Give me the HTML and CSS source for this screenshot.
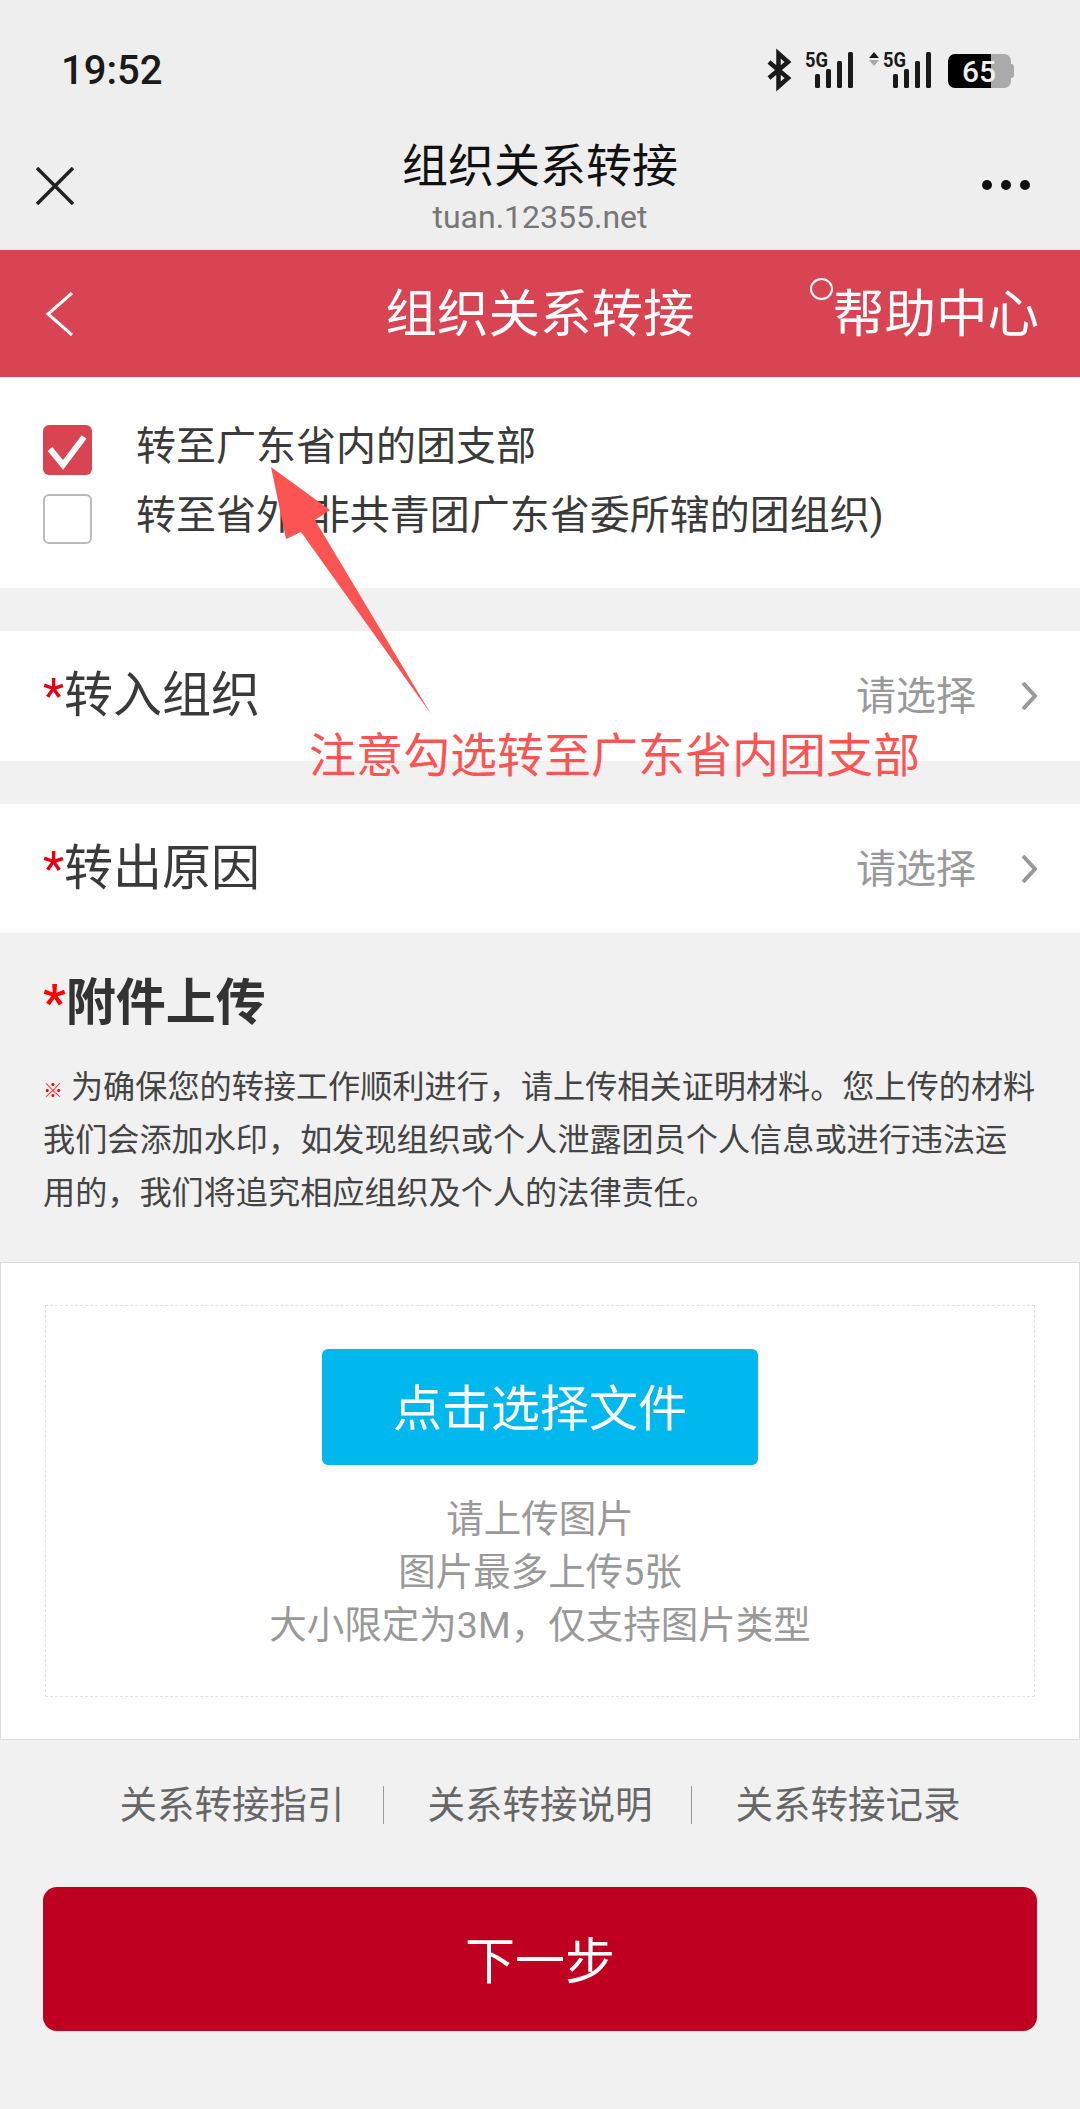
FILE: index.html
```html
<!DOCTYPE html>
<html lang="zh-CN">
<head>
    <meta charset="UTF-8">
    <meta name="viewport" content="width=device-width, initial-scale=1.0">
    <title>组织关系转接</title>
    <link rel="stylesheet" href="styles.css">
</head>
<body>
    <div class="page">
        <div class="status-bar">
            <span class="status-bar__time">19:52</span>
            <svg class="status-bar__icons" width="250" height="60" viewBox="765 40 250 60">
                <polyline class="icon-bt" points="769,62 788,78 778.5,86.5 778.5,53.5 788,62 769,78"/>
                <text class="icon-net" x="805" y="67" textLength="23" lengthAdjust="spacingAndGlyphs">5G</text>
                <rect class="icon-bar" x="815" y="74" width="5" height="14" rx="1.5"/>
                <rect class="icon-bar" x="826" y="69" width="5" height="19" rx="1.5"/>
                <rect class="icon-bar" x="837" y="61" width="5" height="27" rx="1.5"/>
                <rect class="icon-bar" x="848" y="52" width="5" height="36" rx="1.5"/>
                <polygon class="icon-bar" points="874,52 879,58 869,58"/>
                <polygon class="icon-arrow-off" points="869,60 879,60 874,66"/>
                <text class="icon-net" x="883" y="67" textLength="23" lengthAdjust="spacingAndGlyphs">5G</text>
                <rect class="icon-bar" x="893" y="74" width="5" height="14" rx="1.5"/>
                <rect class="icon-bar" x="904" y="69" width="5" height="19" rx="1.5"/>
                <rect class="icon-bar" x="915" y="61" width="5" height="27" rx="1.5"/>
                <rect class="icon-bar" x="926" y="52" width="5" height="36" rx="1.5"/>
                <rect class="icon-arrow-off" x="975" y="54" width="36" height="34" rx="7"/>
                <rect class="icon-arrow-off" x="1008" y="64" width="6" height="14" rx="3"/>
                <path class="icon-batt" d="M955 54h36v34h-36a7 7 0 0 1-7-7v-20a7 7 0 0 1 7-7z"/>
                <text class="icon-level" x="979" y="82" text-anchor="middle">65</text>
            </svg>
        </div>

        <div class="wx-nav">
            <svg class="wx-nav__close" width="38" height="38" viewBox="0 0 38 38">
                <path d="M1 1 L37 37 M37 1 L1 37"/>
            </svg>
            <div class="wx-nav__title">
                <div class="wx-nav__name">组织关系转接</div>
                <div class="wx-nav__url">tuan.12355.net</div>
            </div>
            <div class="wx-nav__more">
                <span></span><span></span><span></span>
            </div>
        </div>

        <div class="header">
            <svg class="header__back" width="28" height="44" viewBox="0 0 28 44">
                <polyline points="26,1 2,22 26,43"/>
            </svg>
            <div class="header__title">组织关系转接</div>
            <div class="header__help"><span class="header__help-text">帮助中心</span></div>
        </div>

        <div class="options">
            <div class="option">
                <span class="checkbox checkbox--on">
                    <svg width="49" height="50" viewBox="0 0 49 50"><polyline points="7,24 20,40 41,12"/></svg>
                </span>
                <span class="option__text">转至广东省内的团支部</span>
            </div>
            <div class="option">
                <span class="checkbox"></span>
                <span class="option__text">转至省外(非共青团广东省委所辖的团组织)</span>
            </div>
        </div>

        <div class="field">
            <span class="field__label"><i class="req">*</i>转入组织</span>
            <span class="field__value">请选择</span>
            <svg class="field__arrow" width="16" height="28" viewBox="0 0 16 28"><polyline points="2,1 14,14 2,27"/></svg>
        </div>
        <div class="field">
            <span class="field__label"><i class="req">*</i>转出原因</span>
            <span class="field__value">请选择</span>
            <svg class="field__arrow" width="16" height="28" viewBox="0 0 16 28"><polyline points="2,1 14,14 2,27"/></svg>
        </div>

        <div class="attach">
            <h2 class="attach__title"><i class="req">*</i>附件上传</h2>
            <p class="attach__note"><i class="attach__mark">※</i> 为确保您的转接工作顺利进行，请上传相关证明材料。您上传的材料我们会添加水印，如发现组织或个人泄露团员个人信息或进行违法运用的，我们将追究相应组织及个人的法律责任。</p>
        </div>

        <div class="upload">
            <div class="upload__box">
                <button class="upload__btn">点击选择文件</button>
                <div class="upload__tips">
                    <div>请上传图片</div>
                    <div>图片最多上传5张</div>
                    <div>大小限定为3M，仅支持图片类型</div>
                </div>
            </div>
        </div>

        <div class="links">
            <a class="links__item">关系转接指引</a>
            <a class="links__item">关系转接说明</a>
            <a class="links__item">关系转接记录</a>
        </div>

        <button class="next-btn">下一步</button>

        <!-- annotation drawn on top of the screenshot -->
        <svg class="note-arrow" width="180" height="260" viewBox="260 460 180 260">
            <polygon points="271,467 330,510 315,520 431,714 301,532 286,539"/>
        </svg>
        <div class="note-text">注意勾选转至广东省内团支部</div>
    </div>
</body>
</html>
```

FILE: styles.css
```css
/* Reset */
* {
    margin: 0;
    padding: 0;
    box-sizing: border-box;
}
body {
    font-family: Roboto, "Noto Sans CJK SC", sans-serif;
    background-color: #f1f1f1;
    color: #333333;
}
i {
    font-style: normal;
}
.page {
    position: relative;
    width: 1080px;
    height: 2109px;
    overflow: hidden;
}

/* Status bar */
.status-bar {
    display: flex;
    align-items: center;
    justify-content: space-between;
    height: 100px;
    padding: 40px 65px 0 61px;
    background-color: #eeeeee;
}
.icon-bt {
    fill: none;
    stroke: #1a1a1a;
    stroke-width: 4.5;
}
.status-bar__time {
    font-size: 40px;
    font-weight: 500;
    color: #1a1a1a;
}
.icon-bar {
    fill: #1a1a1a;
}
.icon-arrow-off {
    fill: #aaaaaa;
}
.icon-batt {
    fill: #000000;
}
.icon-net {
    font-size: 20px;
    font-weight: 700;
    fill: #1a1a1a;
}
.icon-level {
    font-size: 30px;
    font-weight: 500;
    fill: #eeeeee;
}

/* WeChat title bar */
.wx-nav {
    display: grid;
    grid-template-columns: 1fr auto 1fr;
    height: 150px;
    padding-top: 36px;
    background-color: #eeeeee;
}
.wx-nav__close {
    margin: 31px 0 0 36px;
}
.wx-nav__close path {
    fill: none;
    stroke: #222222;
    stroke-width: 3.5;
}
.wx-nav__title {
    text-align: center;
}
.wx-nav__name {
    font-size: 46px;
    line-height: 60px;
    color: #111111;
}
.wx-nav__url {
    font-size: 32px;
    line-height: 42px;
    color: #777777;
}
.wx-nav__more {
    display: flex;
    gap: 9px;
    justify-content: flex-end;
    margin: 44px 50px 0 0;
}
.wx-nav__more span {
    width: 10px;
    height: 10px;
    border-radius: 50%;
    background-color: #111111;
}

/* Red header */
.header {
    display: grid;
    grid-template-columns: 1fr auto 1fr;
    align-items: center;
    height: 127px;
    background-color: #d94453;
    color: #ffffff;
}
.header__back {
    margin-left: 46px;
}
.header__back polyline {
    fill: none;
    stroke: #ffffff;
    stroke-width: 3;
}
.header__title {
    padding-bottom: 8px;
    font-size: 51.5px;
}
.header__help {
    padding: 0 41px 8px 0;
    font-size: 51.5px;
    text-align: right;
}
.header__help-text {
    position: relative;
}
.header__help-text::before {
    content: "";
    position: absolute;
    left: -23px;
    top: -6px;
    width: 19px;
    height: 18px;
    border: 2px solid #ffffff;
    border-radius: 50%;
}

/* Options */
.options {
    display: flex;
    flex-direction: column;
    gap: 19px;
    padding: 48px 43px 44px;
    background-color: #ffffff;
}
.option {
    display: flex;
    align-items: center;
    gap: 44px;
    font-size: 40px;
    color: #3a3a3a;
}
.option__text {
    padding-bottom: 6px;
    line-height: 44px;
}
.checkbox {
    flex: none;
    width: 49px;
    height: 50px;
    border: 2px solid #bbbbbb;
    border-radius: 6px;
}
.checkbox--on {
    border: none;
    background-color: #d94453;
}
.checkbox svg {
    display: block;
}
.checkbox polyline {
    fill: none;
    stroke: #ffffff;
    stroke-width: 6;
}

/* Form rows */
.field {
    display: flex;
    align-items: center;
    height: 130px;
    margin-top: 43px;
    padding: 0 43px 0;
    background-color: #ffffff;
}
.field + .field {
    height: 129px;
}
.field__label {
    flex: 1;
    padding-bottom: 11px;
    font-size: 49px;
    color: #3a3a3a;
}
.req {
    color: #e60012;
}
.field__value {
    padding-bottom: 6px;
    font-size: 40px;
    color: #999999;
}
.field__arrow {
    margin-left: 45px;
}
.field__arrow polyline {
    fill: none;
    stroke: #999999;
    stroke-width: 4;
}

/* Attachments */
.attach {
    padding: 40px 43px 0;
}
.attach__title {
    font-size: 50px;
    font-weight: 700;
    line-height: 60px;
    color: #333333;
}
.attach__title .req {
    color: #ff0000;
}
.attach__note {
    margin-top: 28px;
    font-size: 32.15px;
    line-height: 53px;
    color: #444444;
}
.attach__mark {
    color: #ff0000;
    font-size: 20px;
    font-weight: 700;
    line-height: 0;
}
.upload {
    margin-top: 42px;
    padding: 42px 44px;
    background-color: #ffffff;
    border: 1px solid #dddddd;
}
.upload__box {
    height: 392px;
    padding-top: 43px;
    border: 1px dashed #e2e2e2;
    text-align: center;
}
.upload__btn {
    display: block;
    width: 436px;
    height: 116px;
    margin: 0 auto;
    padding-bottom: 6px;
    border: none;
    border-radius: 6px;
    background-color: #00b7ee;
    color: #ffffff;
    font-family: inherit;
    font-size: 49px;
}
.upload__tips {
    margin-top: 28px;
    font-size: 37.5px;
    line-height: 53px;
    color: #999999;
}

/* Bottom links */
.links {
    display: flex;
    justify-content: center;
    margin-top: 46px;
    padding-right: 6px;
}
.links__item {
    padding: 0 38px 0 44px;
    font-size: 37.5px;
    line-height: 38px;
    color: #666666;
}
.links__item + .links__item {
    border-left: 1px solid #999999;
}
.next-btn {
    display: block;
    width: 994px;
    height: 144px;
    margin: 63px 0 0 43px;
    padding-bottom: 4px;
    border: none;
    border-radius: 14px;
    background-color: #bf0020;
    color: #ffffff;
    font-family: inherit;
    font-size: 50px;
}

/* Annotation */
.note-arrow {
    position: absolute;
    left: 260px;
    top: 460px;
}
.note-arrow polygon {
    fill: #fc5353;
}
.note-text {
    position: absolute;
    left: 309px;
    top: 725px;
    font-size: 47px;
    line-height: 62px;
    white-space: nowrap;
    color: #fc5353;
}
```
